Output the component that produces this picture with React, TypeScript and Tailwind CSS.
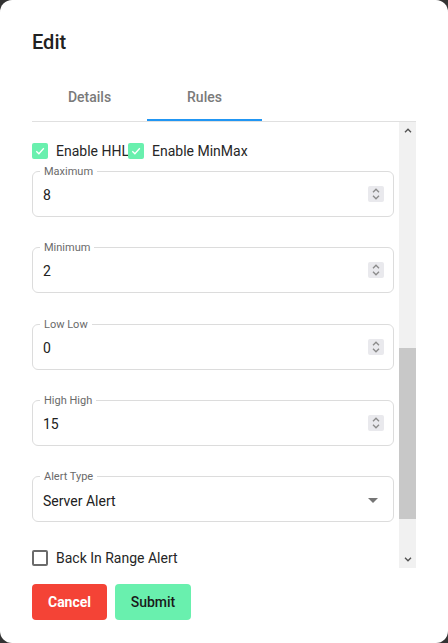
import { ReactNode } from "react";

const FIELDS = [
  { label: "Maximum", value: "8" },
  { label: "Minimum", value: "2" },
  { label: "Low Low", value: "0" },
  { label: "High High", value: "15" },
];

function Chevron({ up, className }: { up?: boolean; className?: string }) {
  return (
    <svg width="8" height="5" viewBox="0 0 8 5" className={className}>
      <path
        d={up ? "M1 4.2 L4 1.2 L7 4.2" : "M1 0.8 L4 3.8 L7 0.8"}
        fill="none"
        stroke="currentColor"
        strokeWidth="1.3"
      />
    </svg>
  );
}

function CheckBox({ checked, label }: { checked: boolean; label: string }) {
  return (
    <label className="flex items-center h-5">
      {checked ? (
        <span className="w-4 h-4 rounded-[2px] bg-[#69f0ae] flex items-center justify-center">
          <svg width="12" height="12" viewBox="0 0 12 12">
            <path d="M2.3 6.2 L4.9 8.7 L9.8 3.3" fill="none" stroke="white" strokeWidth="1.3" />
          </svg>
        </span>
      ) : (
        <span className="w-4 h-4 rounded-[2px] border-2 border-[#6b6b6b]" />
      )}
      <span className="ml-2 text-[14px] text-[#262626]">{label}</span>
    </label>
  );
}

function Outlined({ label, children }: { label: string; children: ReactNode }) {
  return (
    <div className="relative h-[46px] border border-[#dcdcdc] rounded-[6px] flex items-center pl-[10px] pr-[9px]">
      <span className="absolute -top-[7px] left-[7px] px-1 bg-white text-[11px] leading-[13px] text-[#6a6a6a]">
        {label}
      </span>
      {children}
    </div>
  );
}

function NumberField({ label, value }: { label: string; value: string }) {
  return (
    <Outlined label={label}>
      <span className="flex-1 pt-[3px] text-[14px] text-[#212121]">{value}</span>
      <span className="w-4 h-4 rounded-[2px] bg-[#e9e9ed] flex flex-col items-center justify-center gap-[2px] text-[#8a8a8a]">
        <Chevron up />
        <Chevron />
      </span>
    </Outlined>
  );
}

export default function App() {
  return (
    <div className="min-h-screen bg-[#333333]" style={{ fontFamily: "Roboto, 'Noto Sans', sans-serif" }}>
      <div className="h-[643px] bg-white rounded-[12px] flex flex-col px-8">
        <h2 className="pt-[26px] h-[58px] text-[20px] leading-8 font-medium text-[#212121]">Edit</h2>

        <div className="mt-[15px] flex border-b border-[#e0e0e0]">
          <button className="w-[115px] h-[48px] text-[14px] font-medium text-[#7a7a7a]">Details</button>
          <button className="w-[115px] h-[48px] text-[14px] font-medium text-[#7a7a7a] border-b-2 border-[#2196f3] pt-[2px]">
            Rules
          </button>
        </div>

        <div className="h-[446px] flex">
          <div className="flex-1 overflow-hidden pr-[5px] pt-[19px]">
            <div className="flex">
              <CheckBox checked label="Enable HHL" />
              <span className="-ml-[1px]">
                <CheckBox checked label="Enable MinMax" />
              </span>
            </div>
            <div className="mt-[10px] flex flex-col gap-[30.3px]">
              {FIELDS.map((f) => (
                <NumberField key={f.label} label={f.label} value={f.value} />
              ))}
              <Outlined label="Alert Type">
                <span className="flex-1 pt-[4px] text-[14px] text-[#212121]">Server Alert</span>
                <svg width="24" height="24" viewBox="0 0 24 24" className="text-[#757575] -mr-[1px] mt-[2px]">
                  <path d="M7 10l5 5 5-5z" fill="currentColor" />
                </svg>
              </Outlined>
            </div>
            <div className="mt-[26px]">
              <CheckBox checked={false} label="Back In Range Alert" />
            </div>
          </div>

          <div className="w-[17px] bg-[#f1f1f1] flex flex-col text-[#505050]">
            <div className="h-[17px] flex items-center justify-center">
              <Chevron up />
            </div>
            <div className="flex-1 flex flex-col">
              <div className="h-[209px]" />
              <div className="h-[171px] bg-[#c8c8c8]" />
            </div>
            <div className="h-[17px] flex items-center justify-center">
              <Chevron />
            </div>
          </div>
        </div>

        <div className="mt-4 flex gap-2">
          <button className="w-[75px] h-9 rounded-[4px] bg-[#f44336] text-white text-[14px] font-bold">Cancel</button>
          <button className="w-[76px] h-9 rounded-[4px] bg-[#69f0ae] text-[#1a1a1a] text-[14px] font-medium">
            Submit
          </button>
        </div>
      </div>
    </div>
  );
}
